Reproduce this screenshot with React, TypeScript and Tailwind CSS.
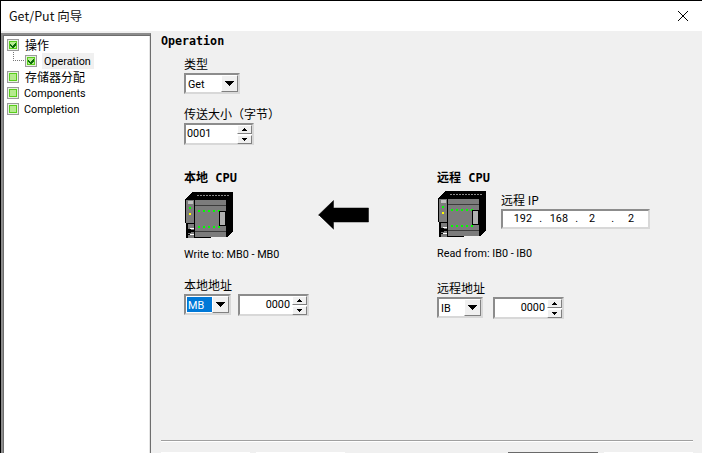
import React from "react";

const ui = "font-['Roboto','Noto_Sans_CJK_SC',sans-serif]";
const cjk = "font-['Noto_Sans_CJK_SC',sans-serif]";
const heading = "font-['DejaVu_Sans_Mono','Noto_Sans_CJK_SC',monospace] font-bold leading-[14px] text-black";
const sunken = "border-2 border-t-[#8c8c8c] border-l-[#8c8c8c] border-r-[#d8d8d8] border-b-[#d8d8d8] bg-white";
const body = "text-[10.8px]";

function Check({ checked = false }: { checked?: boolean }) {
  return (
    <svg width="12" height="12" viewBox="0 0 12 12" shapeRendering="crispEdges" className="shrink-0">
      <rect x="0" y="0" width="12" height="12" fill="#9a9a9a" />
      <rect x="1" y="1" width="10" height="10" fill="#e8f3e0" />
      <rect x="2" y="2" width="8" height="8" fill="#58cc1c" />
      <rect x="3" y="3" width="6" height="6" fill="#b6ea90" />
      {checked && (
        <path d="M3 5h1v1h1v1h1V6h1V5h1V4h1v2H9v1H8v1H7v1H5V8H4V7H3z" fill="#0b6b0b" />
      )}
    </svg>
  );
}

function TreeRow({ label, checked, cn }: { label: string; checked?: boolean; cn?: boolean }) {
  return (
    <div className="flex h-4 items-center pl-[2px]">
      <Check checked={checked} />
      <span className={`text-black ${cn ? `ml-[6px] ${cjk} text-[12px]` : `ml-[5px] pt-[2px] ${ui} ${body}`}`}>{label}</span>
    </div>
  );
}

function DownTri() {
  return (
    <svg width="9" height="5" viewBox="0 0 9 5" shapeRendering="crispEdges">
      <path d="M0 0h9v1H8v1H7v1H6v1H5v1H4V4H3V3H2V2H1V1H0z" fill="#000" />
    </svg>
  );
}

function Select({ value, selected, className }: { value: string; selected?: boolean; className: string }) {
  return (
    <div className={`${sunken} flex items-stretch ${className}`}>
      <div className="flex flex-1 items-stretch pl-px py-[1px]">
        <span className={`flex w-full items-center pl-[1px] pt-[3px] ${ui} ${body} ${selected ? "bg-[#0078d7] text-white" : "text-black"}`}>{value}</span>
      </div>
      <div className="flex w-[17px] items-center justify-center border border-t-white border-l-white border-r-[#808080] border-b-[#808080] bg-[#f0f0f0]">
        <DownTri />
      </div>
    </div>
  );
}

function SpinBtn({ up }: { up?: boolean }) {
  return (
    <div className="flex h-[9px] w-[15px] items-center justify-center border border-t-white border-l-white border-r-[#808080] border-b-[#808080] bg-[#f0f0f0]">
      <svg width="5" height="3" viewBox="0 0 5 3" shapeRendering="crispEdges">
        {up ? <path d="M2 0h1v1h1v1h1v1H0V2h1V1h1z" fill="#000" /> : <path d="M0 0h5v1H4v1H3v1H2V2H1V1H0z" fill="#000" />}
      </svg>
    </div>
  );
}

function Spinner({ value, right, className }: { value: string; right?: boolean; className: string }) {
  return (
    <div className={`${sunken} flex items-center ${className}`}>
      <span className={`flex-1 ${right ? "pr-[2px] text-right" : "pl-px"} ${ui} ${body} text-black`}>{value}</span>
      <div className="flex flex-col gap-px">
        <SpinBtn up />
        <SpinBtn />
      </div>
    </div>
  );
}

function Cpu() {
  const leds = [13, 18, 23, 28, 33];
  const vents = [12, 15, 18, 21, 24, 27, 30, 33, 36, 39, 42];
  return (
    <svg width="48" height="46" viewBox="0 0 48 46" shapeRendering="crispEdges" className="shrink-0">
      <polygon points="7,0 48,0 48,39 42,45 10,46 1,46 1,31 0,31 0,7" fill="#000" />
      {vents.map((x) => (
        <rect key={x} x={x} y="3" width="2" height="1" fill="#8a8a8a" />
      ))}
      <rect x="1" y="8" width="8" height="23" fill="#7c7c7c" />
      <rect x="3" y="9" width="5" height="3" fill="#c0c0c0" />
      <rect x="4" y="15" width="2" height="2" fill="#00ff00" />
      <rect x="4" y="21" width="2" height="2" fill="#ffff00" />
      <rect x="3" y="32" width="6" height="14" fill="#7c7c7c" />
      <path d="M3 37h3v1h3v2H6v1H3v1h3v1H3z" fill="#000" />
      <path d="M5 36h4v1H5zM5 42h4v1H5z" fill="#fff" />
      <rect x="10" y="8" width="31" height="37" fill="#7c7c7c" />
      <rect x="10" y="13" width="31" height="1" fill="#3c3c3c" />
      <rect x="10" y="39" width="31" height="1" fill="#3c3c3c" />
      {leds.map((x) => (
        <React.Fragment key={x}>
          <rect x={x} y="18" width="2" height="2" fill="#00ff00" />
          <rect x={x} y="34" width="2" height="2" fill="#00ff00" />
        </React.Fragment>
      ))}
      <rect x="34" y="19" width="7" height="15" fill="#000" />
      <rect x="35" y="20" width="5" height="13" fill="#b0b0b0" />
    </svg>
  );
}

function Arrow() {
  return (
    <svg width="51" height="31" viewBox="0 0 51 31" className="shrink-0">
      <polygon points="0.5,15 15.5,0.5 15.5,8 50.5,8 50.5,22 15.5,22 15.5,29.5" fill="#000" stroke="#000" strokeWidth="0.5" />
      <polyline points="1,16 16,30.5" fill="none" stroke="#ffffff" strokeWidth="1" />
    </svg>
  );
}

function Label({ children, className = "" }: { children: React.ReactNode; className?: string }) {
  return <div className={`${cjk} text-[12px] leading-[16px] text-black ${className}`}>{children}</div>;
}

export default function App() {
  return (
    <div className="flex h-[453px] w-[702px] flex-col overflow-hidden border-t border-l border-black bg-[#f0f0f0]">
      <header className={`flex h-[30px] shrink-0 items-center bg-white pl-2 pr-[13px] ${ui}`}>
        <span className={`${cjk} text-[12.5px] text-[#111]`}>Get/Put 向导</span>
        <svg width="12" height="12" viewBox="0 0 12 12" className="ml-auto">
          <path d="M1 1L11 11M11 1L1 11" stroke="#000" strokeWidth="1" fill="none" />
        </svg>
      </header>

      <div className="flex min-h-0 flex-1 pt-[2px]">
        <aside className="relative w-[150px] shrink-0 border-t-2 border-l-2 border-r border-t-[#8c8c8c] border-l-[#8c8c8c] border-r-[#6e6e6e] bg-white pl-[1px] pt-[2px] shadow-[inset_1px_1px_0_#6e6e6e,inset_-1px_0_0_#e4e4e4]">
          <div className="pl-px">
            <TreeRow label="操作" checked cn />
            <div className="relative flex h-4 items-center pl-[20px]">
              <span className="absolute left-[8px] top-[-1px] h-[9px] w-[11px] border-b border-l border-dotted border-[#777]" />
              <Check checked />
              <span className={`ml-[5px] flex h-4 w-[52px] items-center bg-[#f0f0f0] pl-[2px] pt-[2px] ${ui} ${body} text-black`}>Operation</span>
            </div>
            <TreeRow label="存储器分配" cn />
            <TreeRow label="Components" />
            <TreeRow label="Completion" />
          </div>
        </aside>

        <main className="flex min-w-0 flex-1 flex-col pl-[10px] pr-[9px] pt-[1px]">
          <div className={`${heading} text-[11.67px]`}>Operation</div>

          <div className="ml-[23px] mt-[8px]">
            <Label>类型</Label>
            <Select value="Get" className="mt-[1px] h-[21px] w-[56px]" />
            <Label className="mt-[12px]">传送大小（字节）</Label>
            <Spinner value="0001" className="mt-[1px] h-[22px] w-[70px]" />
          </div>

          <div className="ml-[23px] mt-[26px] flex h-[155px]">
            <section className="flex w-[134px] shrink-0 flex-col">
              <div className={`${heading} text-[12px]`}>本地 CPU</div>
              <div className="mt-[7px] pl-px"><Cpu /></div>
              <div className={`mt-[10px] ${ui} ${body} leading-[14px] text-black`}>Write to: MB0 - MB0</div>
              <Label className="mt-[15px]">本地地址</Label>
              <div className="mt-[1px] flex gap-[7px]">
                <Select value="MB" selected className="h-[21px] w-[47px]" />
                <Spinner value="0000" right className="h-[22px] w-[71px]" />
              </div>
            </section>

            <div className="mt-[29px] h-[31px]"><Arrow /></div>

            <section className="ml-[68px] flex flex-1 flex-col">
              <div className={`${heading} text-[12px]`}>远程 CPU</div>
              <div className="mt-[6px] flex">
                <div className="pl-px"><Cpu /></div>
                <div className="ml-[15px] mt-[1px] w-[149px]">
                  <Label>远程 IP</Label>
                  <div className={`${sunken} mt-[1px] flex h-[20px] items-center ${ui} ${body} text-black`}>
                    <span className="w-[29px] text-right">192</span>
                    <span className="w-[10px] text-right">.</span>
                    <span className="w-[26px] text-right">168</span>
                    <span className="w-[10px] text-right">.</span>
                    <span className="w-[17px] text-right">2</span>
                    <span className="w-[19px] text-right">.</span>
                    <span className="w-[20px] text-right">2</span>
                  </div>
                </div>
              </div>
              <div className={`mt-[10px] ${ui} ${body} leading-[14px] text-black`}>Read from: IB0 - IB0</div>
              <Label className="mt-[19px]">远程地址</Label>
              <div className="mt-[1px] flex gap-[10px]">
                <Select value="IB" className="h-[21px] w-[46px]" />
                <Spinner value="0000" right className="h-[22px] w-[71px]" />
              </div>
            </section>
          </div>

          <div className="mt-auto h-[2px] border-t border-t-[#a0a0a0] border-b border-b-white" />
          <footer className="mt-[10px] flex h-px justify-between">
            <div className="flex gap-[6px]">
              <div className="h-px w-[89px] bg-white" />
              <div className="h-px w-[89px] bg-white" />
            </div>
            <div className="flex gap-[6px]">
              <div className="h-px w-[90px] bg-[#696969]" />
              <div className="h-px w-[89px] bg-white" />
            </div>
          </footer>
        </main>
      </div>
    </div>
  );
}
